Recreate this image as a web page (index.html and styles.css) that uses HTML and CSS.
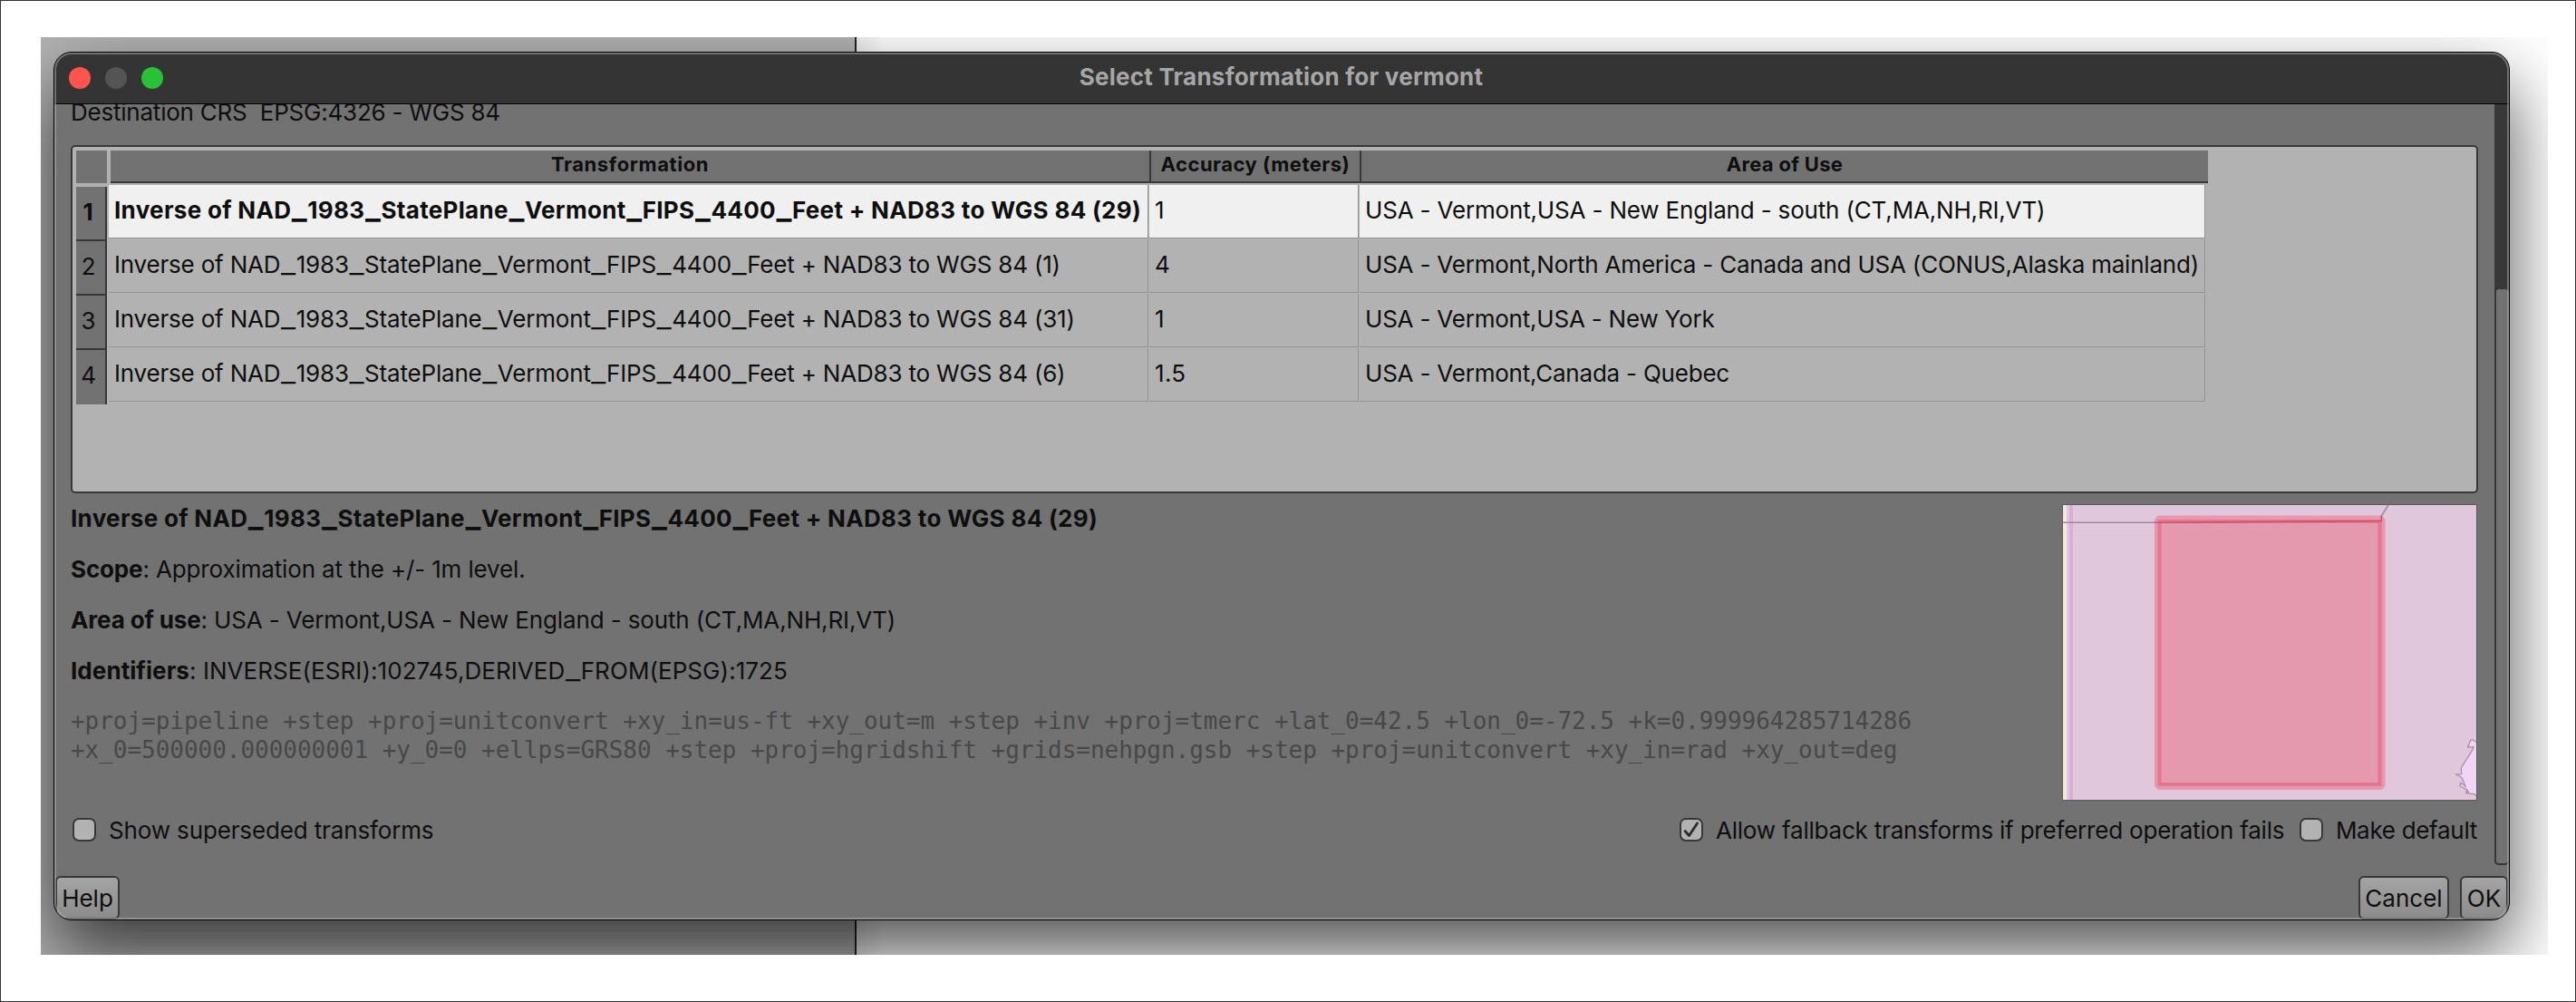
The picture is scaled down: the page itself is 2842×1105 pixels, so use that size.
FILE: index.html
```html
<!DOCTYPE html>
<html lang="en">
<head>
<meta charset="utf-8">
<title>Select Transformation for vermont</title>
<link rel="stylesheet" href="styles.css">
</head>
<body>
<div class="desktop">
  <div class="window">
    <header class="titlebar">
      <div class="lights"><i class="light close"></i><i class="light minimize"></i><i class="light zoom"></i></div>
      <h1 class="title">Select Transformation for vermont</h1>
    </header>

    <div class="scroll">
      <main class="pane">
        <p class="crs">Destination CRS&nbsp; EPSG:4326 - WGS 84</p>

        <section class="frame">
          <div class="numbers">
            <div class="corner"></div>
            <div class="num current">1</div>
            <div class="num">2</div>
            <div class="num">3</div>
            <div class="num">4</div>
          </div>
          <div class="data">
            <div class="heads">
              <div class="head transformation">Transformation</div>
              <div class="head accuracy">Accuracy (meters)</div>
              <div class="head area">Area of Use</div>
            </div>
            <div class="row selected">
              <div class="cell name">Inverse of NAD<span class="u">_</span>1983<span class="u">_</span>StatePlane<span class="u">_</span>Vermont<span class="u">_</span>FIPS<span class="u">_</span>4400<span class="u">_</span>Feet + NAD83 to WGS 84 (29)</div>
              <div class="cell">1</div>
              <div class="cell">USA - Vermont,USA - New England - south (CT,MA,NH,RI,VT)</div>
            </div>
            <div class="row">
              <div class="cell">Inverse of NAD<span class="u">_</span>1983<span class="u">_</span>StatePlane<span class="u">_</span>Vermont<span class="u">_</span>FIPS<span class="u">_</span>4400<span class="u">_</span>Feet + NAD83 to WGS 84 (1)</div>
              <div class="cell">4</div>
              <div class="cell">USA - Vermont,North America - Canada and USA (CONUS,Alaska mainland)</div>
            </div>
            <div class="row">
              <div class="cell">Inverse of NAD<span class="u">_</span>1983<span class="u">_</span>StatePlane<span class="u">_</span>Vermont<span class="u">_</span>FIPS<span class="u">_</span>4400<span class="u">_</span>Feet + NAD83 to WGS 84 (31)</div>
              <div class="cell">1</div>
              <div class="cell">USA - Vermont,USA - New York</div>
            </div>
            <div class="row">
              <div class="cell">Inverse of NAD<span class="u">_</span>1983<span class="u">_</span>StatePlane<span class="u">_</span>Vermont<span class="u">_</span>FIPS<span class="u">_</span>4400<span class="u">_</span>Feet + NAD83 to WGS 84 (6)</div>
              <div class="cell value">1.5</div>
              <div class="cell">USA - Vermont,Canada - Quebec</div>
            </div>
          </div>
        </section>

        <section class="details">
          <div class="info">
            <p class="name">Inverse of NAD<span class="u">_</span>1983<span class="u">_</span>StatePlane<span class="u">_</span>Vermont<span class="u">_</span>FIPS<span class="u">_</span>4400<span class="u">_</span>Feet + NAD83 to WGS 84 (29)</p>
            <p><b>Scope</b>: Approximation at the +/- 1m level.</p>
            <p><b>Area of use</b>: USA - Vermont,USA - New England - south (CT,MA,NH,RI,VT)</p>
            <p class="ids"><b>Identifiers</b>: INVERSE(ESRI):102745,DERIVED<span class="u">_</span>FROM(EPSG):1725</p>
            <p class="proj">+proj=pipeline +step +proj=unitconvert +xy_in=us-ft +xy_out=m +step +inv +proj=tmerc +lat_0=42.5 +lon_0=-72.5 +k=0.999964285714286<br>+x_0=500000.000000001 +y_0=0 +ellps=GRS80 +step +proj=hgridshift +grids=nehpgn.gsb +step +proj=unitconvert +xy_in=rad +xy_out=deg</p>
          </div>
          <svg class="map" viewBox="0 0 458 327" width="458" height="327">
            <rect width="458" height="327" fill="#e0c7dc"/>
            <rect x="1" y="1" width="4" height="325" fill="#f0e9dc"/>
            <rect x="5" y="1" width="3" height="325" fill="#e2c8da"/>
            <rect x="8" y="1" width="4" height="325" fill="#d9aeda"/>
            <path class="island" d="M458 263 453 259.700 450.700 260.300 447.600 268 453.700 267.700 453.400 270 440.300 290.700 440.700 297.700 434.200 298 438.800 300 441.500 302.300 445 311.300 440 307.300 438.800 310.700 447.200 315.300 445.700 317.700 448.800 316.700 446.500 318.700 454.600 319.700 458 322.700z"/>
            <path class="halo" d="M106 12.500H352.500L356.500 16.500V311L352.500 315H106L102 311V16.500z"/>
            <rect x="107.500" y="19" width="243" height="290" fill="#e499af" stroke="#e8758f" stroke-width="4"/>
            <path class="boundary" d="M1 20.300 103 20.200M352.300 13 360 1"/>
            <path class="boundary over" d="M102 20.200 352.300 18.500V12.500"/>
            <rect x=".5" y=".5" width="457" height="326" fill="none" stroke="#5c5c5c"/>
          </svg>
        </section>

        <div class="options">
          <label class="option superseded"><i class="box"></i>Show superseded transforms</label>
          <label class="option fallback"><i class="box"><svg viewBox="0 0 22 22" width="22" height="22"><path d="M4 12.500 8.500 17.500 17.500 4" fill="none" stroke="#2c2c2c" stroke-width="2.800" stroke-linecap="round" stroke-linejoin="round"/></svg></i>Allow fallback transforms if preferred operation fails</label>
          <label class="option default"><i class="box"></i>Make default</label>
        </div>
      </main>
      <div class="scrollbar"><div class="thumb"></div></div>
    </div>

    <footer class="buttons">
      <button class="btn help">Help</button>
      <button class="btn cancel">Cancel</button>
      <button class="btn ok">OK</button>
    </footer>
  </div>
</div>
</body>
</html>
```
FILE: styles.css
```css
* { box-sizing: border-box; }

body {
  margin: 0;
  width: 2842px;
  height: 1105px;
  padding: 40px 30px 51px 44px;
  border: 1px solid #333;
  background: #fff;
  color: #0e0e0e;
  font: 26px/32px Inter, "Liberation Sans", sans-serif;
  letter-spacing: -.14px;
  white-space: nowrap;
}

h1, p { margin: 0; }
b { font-weight: 700; }

.desktop {
  width: 2766px;
  height: 1012px;
  padding: 16px 42px 38px 14px;
  overflow: hidden;
  background: linear-gradient(90deg, #b2b2b2 898px, #222 898px 900px, #ececec 900px, #fff 930px);
}

.window {
  position: relative;
  display: flex;
  flex-direction: column;
  width: 2710px;
  height: 958px;
  border: 1px solid #000;
  border-radius: 20px;
  background: #727272;
  box-shadow: 0 36px 80px rgba(0, 0, 0, .68);
  overflow: hidden;
}

/* thin highlight along the inner edge of the window */
.window::after {
  content: "";
  position: absolute;
  inset: 0;
  border: 2px solid rgba(170, 175, 170, .5);
  border-radius: 19px;
  pointer-events: none;
}

.titlebar {
  display: flex;
  align-items: center;
  height: 57px;
  padding-left: 16px;
  border-bottom: 1px solid #000;
  background: #343434;
}

.lights { display: flex; gap: 16px; width: 104px; }
.light { width: 24px; height: 24px; border-radius: 50%; }
.close { background: #ff544d; }
.minimize { background: #545454; }
.zoom { background: #28c138; }

.title {
  flex: 1;
  padding: 0 121px 2px 0;
  text-align: center;
  color: #a6a6a6;
  font-size: 26px;
  font-weight: 700;
  letter-spacing: .25px;
}

.scroll { display: flex; height: 839px; overflow: hidden; }
.pane { width: 2692px; padding: 0 19px 0 18px; }
.crs { margin: -7px 0 20px; letter-spacing: -.22px; }

/* wide underscore of the interface font */
.u {
  margin: 0 .6px;
  font-size: 36px;
  font-weight: 300;
  line-height: 0;
  letter-spacing: 0;
}
.name .u { font-weight: 600; }

.frame {
  display: flex;
  gap: 2px;
  height: 384px;
  margin-right: -1px;
  padding: 4px 0 0 4px;
  border: 2px solid #383838;
  border-radius: 5px;
  background: #b2b2b2;
}

.numbers { width: 34px; }
.corner { height: 36px; margin-bottom: 4px; background: #727272; }
.num {
  height: 60px;
  padding: 12px 5px 0 0;
  border-right: 2px solid #383838;
  border-bottom: 2px solid #383838;
  background: #727272;
  text-align: center;
}
.num.current { font-weight: 700; padding-right: 6px; }
.num:last-child { border-bottom: 0; }

.data { width: 2316px; }
.heads {
  display: grid;
  grid-template-columns: 1148px 232px 934px;
  height: 36px;
  margin: 0 0 2px 2px;
  border-bottom: 2px solid #383838;
  background: #727272;
  font-size: 22px;
  font-weight: 700;
  line-height: 30px;
  text-align: center;
}
.head + .head { border-left: 2px solid #383838; margin-left: -2px; }
.transformation { padding-right: 2px; letter-spacing: .6px; }
.accuracy { padding-right: 2px; letter-spacing: .5px; }
.area { letter-spacing: .3px; }

.row {
  display: grid;
  grid-template-columns: 1147px 231px 933px;
  gap: 1px;
  height: 59px;
  margin-bottom: 1px;
}
.cell {
  padding: 12px 0 0 6px;
  border-right: 1px solid #929292;
  border-bottom: 1px solid #929292;
  letter-spacing: -.19px;
}
.cell:last-child { letter-spacing: -.21px; }
.selected .cell:last-child { letter-spacing: -.17px; }
.row .value { letter-spacing: .3px; }
.selected .cell { background: #f0f0f0; }
.row .name, .info .name { font-weight: 700; letter-spacing: .31px; }

.details { display: flex; justify-content: space-between; height: 327px; margin: 12px 0 19px; }
.info p { margin-bottom: 24px; }
.info .ids { letter-spacing: .07px; }
.info .proj {
  margin-top: -1px;
  color: #484848;
  font-family: "DejaVu Sans Mono", "Liberation Mono", monospace;
  letter-spacing: -.03px;
}
.map { display: block; }
.island { fill: #f0d6f4; stroke: #a98fa6; stroke-width: 1.3; }
.halo { fill: #e797ae; }
.boundary { fill: none; stroke: #a287a0; stroke-width: 1.6; }
.boundary.over { stroke: #c4566f; }

.options { display: flex; height: 26px; line-height: 27px; }
.option { display: flex; gap: 14px; }
.superseded { width: 1775px; padding-left: 2px; }
.fallback { width: 684px; letter-spacing: -.2px; }
.default { letter-spacing: -.3px; }
.box {
  width: 26px;
  height: 26px;
  border: 2px solid #383838;
  border-radius: 7px;
  background: #b2b2b2;
}
.box svg { display: block; }

.scrollbar { width: 16px; padding-top: 202px; background: #383838; border-radius: 0 0 5px 5px; }
.thumb {
  height: 637px;
  border: 2px solid #383838;
  border-right: 0;
  border-radius: 5px;
  background: #727272;
}

.buttons { display: flex; height: 60px; padding: 12px 1px 0; }
.btn {
  height: 48px;
  padding: 1px 0 0;
  border: 2px solid #383838;
  border-radius: 6px;
  background: linear-gradient(#a4a4a4, #8b8b8b);
  color: #0e0e0e;
  font: 26px/32px Inter, "Liberation Sans", sans-serif;
}
.help { width: 71px; margin-right: auto; }
.cancel { width: 100px; margin-right: 12px; }
.ok { width: 53px; }
```
